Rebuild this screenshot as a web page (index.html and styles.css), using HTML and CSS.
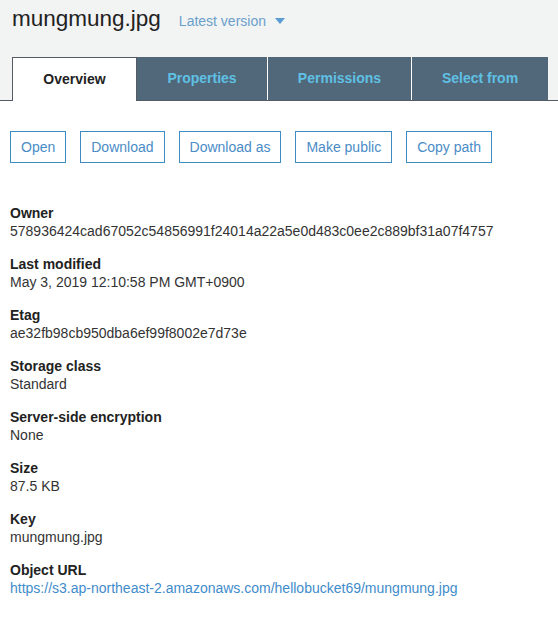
FILE: index.html
```html
<!DOCTYPE html>
<html>
<head>
<meta charset="utf-8">
<link rel="stylesheet" href="styles.css">
</head>
<body>
<div class="header">
  <div class="title-row">
    <span class="title">mungmung.jpg</span>
    <span class="version">Latest version
      <svg class="caret" width="10" height="6" viewBox="0 0 10 6"><path d="M0 0H10L5 6Z" fill="#5a9bd2"/></svg>
    </span>
  </div>
  <div class="tabs">
    <div class="tab tab-active">Overview</div>
    <div class="tab tab-props">Properties</div>
    <div class="tab tab-perms">Permissions</div>
    <div class="tab tab-select">Select from</div>
  </div>
</div>
<div class="actions">
  <button class="btn">Open</button>
  <button class="btn">Download</button>
  <button class="btn">Download as</button>
  <button class="btn">Make public</button>
  <button class="btn">Copy path</button>
</div>
<dl class="details">
  <div class="item"><dt>Owner</dt><dd>578936424cad67052c54856991f24014a22a5e0d483c0ee2c889bf31a07f4757</dd></div>
  <div class="item"><dt>Last modified</dt><dd>May 3, 2019 12:10:58 PM GMT+0900</dd></div>
  <div class="item"><dt>Etag</dt><dd>ae32fb98cb950dba6ef99f8002e7d73e</dd></div>
  <div class="item"><dt>Storage class</dt><dd>Standard</dd></div>
  <div class="item"><dt>Server-side encryption</dt><dd>None</dd></div>
  <div class="item"><dt>Size</dt><dd>87.5 KB</dd></div>
  <div class="item"><dt>Key</dt><dd>mungmung.jpg</dd></div>
  <div class="item"><dt>Object URL</dt><dd><a class="link" href="#">https://s3.ap-northeast-2.amazonaws.com/hellobucket69/mungmung.jpg</a></dd></div>
</dl>
</body>
</html>
```

FILE: styles.css
```css
html, body {
  margin: 0;
  padding: 0;
  background: #ffffff;
  font-family: "Liberation Sans", Arial, sans-serif;
  color: #333333;
}

.header {
  background: #f2f3f3;
  padding-top: 4px;
}

.title-row {
  display: flex;
  align-items: baseline;
  padding-left: 12px;
  height: 53px;
}

.title {
  font-size: 22.5px;
  line-height: 30px;
  color: #222222;
}

.version {
  margin-left: 18px;
  font-size: 14px;
  color: #6a9fcc;
}

.caret {
  margin-left: 5px;
  vertical-align: 2px;
}

.tabs {
  display: flex;
  align-items: flex-end;
  padding-left: 12px;
  border-bottom: 1px solid #545b64;
  height: 43px;
}

.tab {
  box-sizing: border-box;
  height: 43px;
  display: flex;
  align-items: center;
  justify-content: center;
  font-size: 14px;
  font-weight: bold;
  background: #51687a;
  color: #5fc0e4;
  padding-bottom: 2px;
}

.tab-active {
  width: 125px;
  height: 44px;
  margin-bottom: -1px;
  background: #ffffff;
  color: #222222;
  border: 1px solid #545b64;
  border-bottom: none;
  padding-bottom: 1px;
}

.tab-props {
  width: 130px;
}

.tab-perms {
  width: 144px;
  border-left: 1px solid #ffffff;
}

.tab-select {
  width: 137px;
  border-left: 1px solid #ffffff;
}

.actions {
  display: flex;
  gap: 14px;
  padding: 30px 0 0 10px;
}

.btn {
  height: 32px;
  padding: 0 10px;
  background: #ffffff;
  border: 1px solid #3f8cc4;
  color: #4a8cc6;
  font-family: "Liberation Sans", Arial, sans-serif;
  font-size: 14px;
  border-radius: 0;
  margin: 0;
}

.details {
  margin: 41px 0 0 0;
  padding-left: 10px;
  display: flex;
  flex-direction: column;
  gap: 15px;
}

.item dt {
  font-size: 14px;
  line-height: 18px;
  font-weight: bold;
  color: #222222;
}

.item dd {
  margin: 0;
  font-size: 14px;
  line-height: 18px;
  color: #333333;
}

.link {
  color: #3f8ccb;
  text-decoration: none;
}
```
